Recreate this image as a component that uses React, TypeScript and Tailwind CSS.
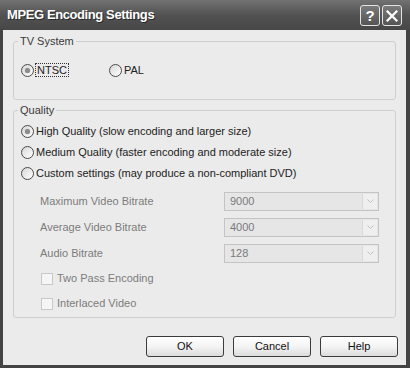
import { type ReactNode } from 'react'

const FONT = { fontFamily: '"Liberation Sans", Arial, sans-serif' }

const Radio = ({ checked }: { checked?: boolean }) => (
  <span className="flex h-[13px] w-[13px] shrink-0 items-center justify-center rounded-full border border-[#4a4a4a] bg-gradient-to-br from-[#d8d8d8] to-[#ffffff]">
    {checked && <span className="h-[5px] w-[5px] rounded-full bg-[#8c8c8c] shadow-[0_0_1px_#9a9a9a]" />}
  </span>
)

const Checkbox = () => (
  <span className="h-[12px] w-[12px] shrink-0 border border-[#c9c9c9] bg-[#f5f5f5]" />
)

const Combo = ({ value }: { value: string }) => (
  <div className="flex h-[19px] w-[155px] items-center border border-[#c4c4c4] bg-[#e6e6e6] p-[1px]">
    <span className="flex-1 pl-[4px] text-[11px] leading-none text-[#7a7a7a]">{value}</span>
    <span className="flex h-full w-[15px] items-center justify-center border-l border-[#d8d8d8] bg-[#efefef]">
      <svg width="7" height="4" viewBox="0 0 7 4">
        <path d="M0.5 0.5 L3.5 3.5 L6.5 0.5" fill="none" stroke="#c0c0c0" strokeWidth="1" />
      </svg>
    </span>
  </div>
)

const Group = ({ title, className, children }: { title: string; className?: string; children: ReactNode }) => (
  <fieldset className={`rounded-[3px] border border-[#cfcfcf] ${className ?? ''}`}>
    <legend className="ml-[4px] px-[2px] text-[11px] leading-[13px] text-[#3a3a3a]">{title}</legend>
    {children}
  </fieldset>
)

const Button = ({ label }: { label: string }) => (
  <button className="h-[21px] w-[78px] rounded-[3px] border border-[#3c3c3c] bg-gradient-to-b from-[#ffffff] via-[#f4f4f4] to-[#dcdcdc] text-[11px] leading-none text-[#111]">
    {label}
  </button>
)

const QUALITY = [
  { label: 'High Quality (slow encoding and larger size)', checked: true },
  { label: 'Medium Quality (faster encoding and moderate size)' },
  { label: 'Custom settings (may produce a non-compliant DVD)' },
]

const BITRATES = [
  { label: 'Maximum Video Bitrate', value: '9000' },
  { label: 'Average Video Bitrate', value: '4000' },
  { label: 'Audio Bitrate', value: '128' },
]

export default function App() {
  return (
    <div className="flex h-[368px] w-[410px] flex-col bg-[#444]" style={FONT}>
      {/* title bar */}
      <div className="flex h-[30px] items-start bg-gradient-to-b from-[#727272] via-[#525252] to-[#474747] pl-[7px] pr-[8px]">
        <span className="mt-[7px] text-[13px] font-bold leading-[16px] tracking-[-0.4px] text-white [text-shadow:1px_1px_#2a2a2a]">
          MPEG Encoding Settings
        </span>
        <div className="ml-auto mt-[5px] flex gap-[2px]">
          <span className="flex h-[21px] w-[20px] items-center justify-center rounded-[3px] border border-[#e4e4e4] bg-gradient-to-b from-[#7a7a7a] to-[#555] text-[15px] font-bold leading-none text-white">
            ?
          </span>
          <span className="flex h-[21px] w-[20px] items-center justify-center rounded-[3px] border border-[#e4e4e4] bg-gradient-to-b from-[#7a7a7a] to-[#555]">
            <svg width="12" height="12" viewBox="0 0 12 12">
              <path d="M1.5 1.5 L10.5 10.5 M10.5 1.5 L1.5 10.5" stroke="white" strokeWidth="2.2" strokeLinecap="square" />
            </svg>
          </span>
        </div>
      </div>

      <div className="flex flex-1 flex-col pb-[3px] pl-[3px] pr-[4px]">
        <div className="flex flex-1 flex-col bg-[#ebebeb] pb-[8px] pl-[10px] pr-[8px] pt-[5px] text-[11px] text-[#222]">
          <Group title="TV System" className="mr-[2px] pb-[22px] pt-[15px]">
            <div className="flex h-[14px] items-center pl-[7px]">
              <label className="flex w-[88px] items-center gap-[1px]">
                <Radio checked />
                <span className="border border-dotted border-[#333] px-[1px] leading-[12px]">NTSC</span>
              </label>
              <label className="flex items-center gap-[2px]">
                <Radio />
                <span className="leading-[12px]">PAL</span>
              </label>
            </div>
          </Group>

          <Group title="Quality" className="mr-[2px] mt-[4px] pb-[1px] pt-[4px]">
            {QUALITY.map(q => (
              <div key={q.label} className="flex h-[21px] items-center gap-[2px] pl-[7px]">
                <Radio checked={q.checked} />
                <span className="leading-[13px]">{q.label}</span>
              </div>
            ))}
            <div className="mt-[4px]">
              {BITRATES.map(b => (
                <div key={b.label} className="flex h-[26px] items-center pl-[26px] pr-[16px]">
                  <span className="text-[#7c7c7c]">{b.label}</span>
                  <div className="ml-auto">
                    <Combo value={b.value} />
                  </div>
                </div>
              ))}
            </div>
            {['Two Pass Encoding', 'Interlaced Video'].map(c => (
              <div key={c} className="flex h-[25px] items-center gap-[4px] pl-[27px]">
                <Checkbox />
                <span className="text-[#7c7c7c]">{c}</span>
              </div>
            ))}
          </Group>

          <div className="mt-[18px] flex justify-end gap-[9px]">
            <Button label="OK" />
            <Button label="Cancel" />
            <Button label="Help" />
          </div>
        </div>
      </div>
    </div>
  )
}
